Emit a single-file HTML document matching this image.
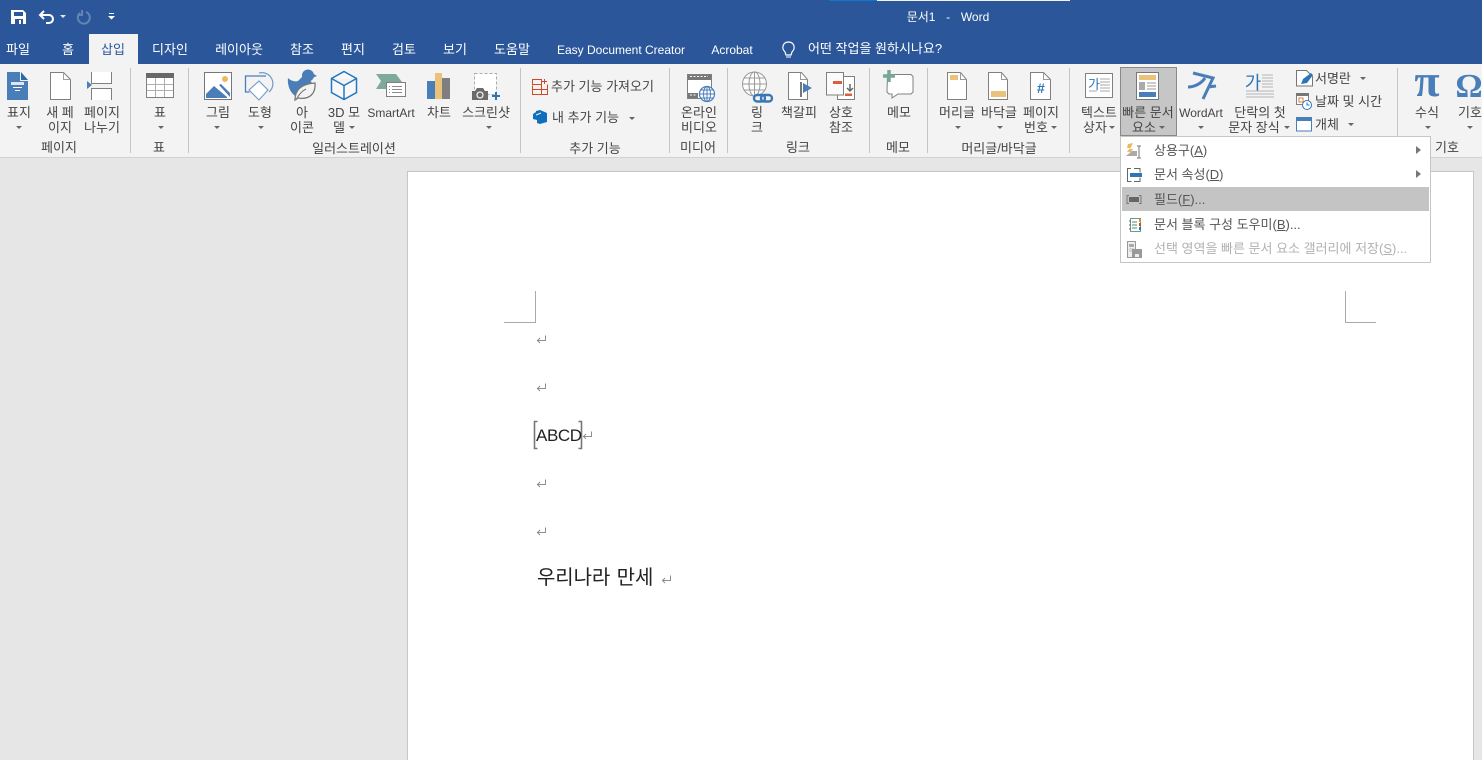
<!DOCTYPE html>
<html lang="ko"><head><meta charset="utf-8"><title>문서1 - Word</title>
<style>
html,body{margin:0;padding:0;width:1482px;height:760px;overflow:hidden;background:#e6e6e6}
body{font-family:"Liberation Sans","Noto Sans CJK KR",sans-serif;font-size:13px;color:#444;position:relative}
#b{position:absolute;left:0;top:0;width:1482px;height:64px;background:#2b579a}
#r{position:absolute;left:0;top:64px;width:1482px;height:93px;background:#f3f3f3;border-bottom:1px solid #d2d2d2}
#p{position:absolute;left:407px;top:171px;width:1065px;height:600px;background:#fff;border:1px solid #c6c6c6}
svg{position:absolute;left:0;top:0}
.c,.l{position:absolute;white-space:nowrap;line-height:16px}
.c{transform:translate(-50%,calc(-50% + 2px))}
.l{transform:translateY(calc(-50% + 2px))}
.w{color:#fff}
.g{color:#b1b1b1}
.m{color:#555}
.e{font-size:12px}
u{text-underline-offset:1px}
</style></head><body>
<div id="b"></div><div id="r"></div><div id="p"></div>
<svg width="1482" height="760" viewBox="0 0 1482 760" fill="none">
<!-- title bar -->
<rect x="829" y="0" width="48" height="1" fill="#0a7ad1"/><rect x="877" y="0" width="193" height="1" fill="#f2f2f2"/>
<rect x="89" y="34" width="49" height="30" fill="#f3f3f3"/>
<path d="M11 10h12l3 3v11H11z" fill="#fff"/><rect x="14" y="12" width="9" height="4" fill="#2b579a"/><rect x="15" y="19" width="8" height="5" fill="#2b579a"/><rect x="19" y="20" width="2" height="4" fill="#fff"/>
<path d="M41 15h8a4 4 0 0 1 0 8h-3M44 11l-4 4 4 4" stroke="#fff" stroke-width="2"/>
<path d="M60 15h6l-3 3z" fill="#dfe6f1"/>
<path d="M86 12a6 6 0 1 1-7 2l1-1M82 10v5h-4" stroke="#6484b5" stroke-width="2"/>
<path d="M109 13h5v1h-5zM108 16h7l-3.500 3.500z" fill="#fff"/>
<path d="M785 52c-4-4-2-10 3.500-10s7.500 6 3.500 10l-1 3h-5z" stroke="#fff" stroke-width="1.200"/><path d="M786 57h5" stroke="#fff"/>
<!-- separators -->
<path d="M130.500 68v85M188.500 68v85M520.500 68v85M669.500 68v85M727.500 68v85M869.500 68v85M927.500 68v85M1069.500 68v85M1397.500 68v85" stroke="#c4c4c4"/>
<!-- cover -->
<path d="M7 72h13v9h8v19H7z" fill="#4a7eb8"/><path d="M21 72l7 8h-7z" fill="#2f68a8"/><rect x="11" y="82" width="13" height="3" fill="#dce7f2"/><path d="M13 87.500h9M15 90.500h5" stroke="#fff"/>
<!-- new page -->
<path d="M50.500 72.500h13l7 7v20h-20z" fill="#fff" stroke="#808080"/><path d="M63.500 72.500v7h7" stroke="#a0a0a0"/>
<!-- page break -->
<path d="M91.500 72v11.500h20V72M91.500 100V88.500h20V100" fill="#fff" stroke="#808080"/><path d="M87 81l5 4-5 4z" fill="#4a7eb8"/>
<!-- table -->
<rect x="146" y="73" width="28" height="25" fill="#fff"/>
<path d="M146 84.500h28M146 90.500h28M155.500 78v20M164.500 78v20" stroke="#b0b0b0"/><path d="M146.500 73v24.500h27V73" stroke="#808080"/><rect x="146" y="73" width="28" height="5" fill="#696969"/>
<!-- picture -->
<rect x="204.500" y="72.500" width="27" height="27" fill="#fff" stroke="#777"/><circle cx="225" cy="79" r="3" fill="#eab95e"/><path d="M206 98v-4l8-8 13 11v1zM219 85l2-1 9 9v4z" fill="#4a7eb8"/>
<!-- shapes -->
<path d="M266 76h-20.500v16h4" stroke="#4a7eb8" stroke-width="1.300"/><path d="M259 81l9 9-9 10-10-10z" fill="#fff" stroke="#6e9bc9" stroke-width="1.100"/><path d="M259 73a11 11 0 0 1 10 19" stroke="#6e9bc9" stroke-width="1.200"/>
<!-- icons -->
<circle cx="308" cy="75.500" r="6" fill="#4a7eb8"/><path d="M312 73l5 3-5 2z" fill="#4a7eb8"/><path d="M288 78c3 3 7 4 10 3l4-4 10 5-8 6-6 9c-7-2-11-11-10-19z" fill="#4a7eb8"/><path d="M295 100c0-8 4-16 20-17 1 10-5 17-17 15z" fill="#f3f3f3" stroke="#777" stroke-width="1.300"/><path d="M296 100c3-6 6-9 10-11" stroke="#777"/>
<!-- 3D -->
<path d="M344 71.500l12.500 7v14l-12.500 7-12.500-7v-14zM331.500 78.500l12.500 7 12.500-7M344 85.500v14" stroke="#2478c0" stroke-width="1.500" fill="#f8f8f8"/>
<!-- smartart -->
<path d="M376 74h20l6 8h-16v7h-10l5-8z" fill="#7fa99b"/><rect x="386.500" y="82.500" width="19" height="14" fill="#fff" stroke="#808080"/><path d="M392 86.500h10M392 89.500h10M392 92.500h10M389 86.500h1M389 89.500h1M389 92.500h1" stroke="#8c8c8c"/>
<!-- chart -->
<rect x="427" y="81" width="8" height="18" fill="#4a7eb8"/><rect x="435" y="73" width="7" height="26" fill="#eac27a"/><rect x="442" y="78" width="8" height="21" fill="#7f7f7f"/>
<!-- screenshot -->
<rect x="474.500" y="73.500" width="22" height="21" fill="#fff" stroke="#aaa" stroke-dasharray="3 2"/><path d="M472 91h3l2-3h6l2 3h3v9h-16z" fill="#6b6b6b"/><circle cx="480" cy="95" r="3" fill="#6b6b6b" stroke="#eee" stroke-width="1.300"/><path d="M496 92v8M492 96h8" stroke="#2e75b6" stroke-width="2"/>
<!-- add-ins -->
<path d="M532.500 85.500v9h15v-10M532.500 84.500h9v-5h-9zM541.500 84.500v10M532.500 89.500h15M544.500 79v5M542 81.500h5" stroke="#d24726"/>
<path d="M540 110l7 3v9l-7 2-3-1v-3l-4-1v-5l3-2v-1z" fill="#106ebe"/><path d="M536 115l5-2" stroke="#f3f3f3"/>
<!-- video -->
<rect x="687.500" y="74.500" width="24" height="24" fill="#fff" stroke="#808080"/><path d="M688 75h23v5h-23zM688 93h10v5h-10z" fill="#777"/><path d="M690 76.500h18M690 95h6" stroke="#fff" stroke-dasharray="2 1.500"/>
<circle cx="707" cy="94" r="7.500" fill="#fff" stroke="#4a7eb8" stroke-width="1.200"/><path d="M699.500 94h15M707 86.500v15M701 90h12M701 98h12" stroke="#4a7eb8"/><ellipse cx="707" cy="94" rx="3.500" ry="7.500" stroke="#4a7eb8"/>
<!-- link -->
<circle cx="754.500" cy="84" r="12" fill="#fdfdfd" stroke="#9a9a9a"/><ellipse cx="754.500" cy="84" rx="5.500" ry="12" stroke="#9a9a9a"/><path d="M754.500 72v24M742.500 84h24M744.500 78h20M744.500 90h20" stroke="#9a9a9a"/>
<rect x="754" y="95" width="11" height="6.500" rx="3.200" stroke="#3a78b5" stroke-width="2.400" fill="#f3f3f3"/><rect x="761" y="95" width="11" height="6.500" rx="3.200" stroke="#3a78b5" stroke-width="2.400"/>
<!-- bookmark -->
<path d="M788.500 72.500h13l6 7v20h-19z" fill="#fff" stroke="#808080"/><path d="M800.500 72.500v7h7" stroke="#999"/><rect x="800" y="82" width="2" height="15" fill="#777"/><path d="M803 83l9 5-9 5z" fill="#4a7eb8"/>
<!-- cross ref -->
<rect x="837.500" y="76.500" width="17" height="23" fill="#fff" stroke="#808080"/><rect x="826.500" y="72.500" width="17" height="22.500" fill="#fbfbfb" stroke="#808080"/><rect x="833" y="81" width="9" height="3" fill="#d9603f"/><rect x="845" y="93.500" width="7" height="2.500" fill="#d9603f"/><path d="M850 84v7M847 88l3 3 3-3" stroke="#666" stroke-width="1.500"/>
<!-- comment -->
<path d="M887.500 74.500h23.500l2 2v15.500l-2 2H898l-6 4v-4h-3l-2-2z" fill="#fff" stroke="#808080"/><path d="M889 70v12M883 76h12" stroke="#78a797" stroke-width="3.500"/>
<!-- header footer number -->
<path d="M947.500 72.500h13l6 7v20h-19z" fill="#fff" stroke="#808080"/><path d="M960.500 72.500v7h6" stroke="#999"/><rect x="950" y="75" width="8" height="5" fill="#eac27a"/>
<path d="M988.500 72.500h13l6 7v20h-19z" fill="#fff" stroke="#808080"/><path d="M1001.500 72.500v7h6" stroke="#999"/><rect x="991" y="91" width="15" height="6" fill="#eac27a"/>
<path d="M1030.500 72.500h13l7 7v20h-20z" fill="#fff" stroke="#808080"/><path d="M1043.500 72.500v7h7" stroke="#999"/>
<!-- text box -->
<rect x="1085.500" y="73.500" width="27" height="24" fill="#fff" stroke="#808080"/><path d="M1100 79h10M1100 82h10M1100 85h10M1100 88h10M1100 91h10M1089 91h8" stroke="#aaa"/>
<!-- quick parts highlighted -->
<rect x="1120.500" y="67.500" width="56" height="68" fill="#c6c6c6" stroke="#8a8a8a"/>
<rect x="1136.500" y="72.500" width="22" height="27" fill="#fff" stroke="#777"/><rect x="1139" y="75" width="17" height="5" fill="#eac27a"/><rect x="1139" y="82" width="6" height="8" fill="#aaa"/><path d="M1147 83h9M1147 86h9M1147 89h9" stroke="#999"/><rect x="1139" y="92" width="17" height="5" fill="#4a7eb8"/>
<!-- wordart -->
<path d="M1188 87c6 0 13-3 17-9" stroke="#4a7eb8" stroke-width="3"/><path d="M1193 73l20 5-10 21M1208 87l8-1" stroke="#4a7eb8" stroke-width="3"/>
<!-- drop cap -->
<path d="M1262 75h11M1262 78h11M1262 81h11M1262 84h11M1262 87h11M1246 91h28M1246 94h28M1246 97h28" stroke="#b4b4b4"/>
<!-- signature -->
<path d="M1296.500 70.500h10l6 6v9.500h-16z" fill="#fff" stroke="#777"/><path d="M1301 84l2-5 8-6 2 2-6 8z" fill="#2e75b6"/>
<!-- date -->
<rect x="1296.500" y="93.500" width="12" height="11" fill="#fff" stroke="#808080"/><rect x="1296" y="93" width="13" height="3" fill="#777"/><rect x="1299" y="98" width="4" height="4" fill="#fff" stroke="#d9803f"/><circle cx="1307" cy="105" r="4.500" fill="#fff" stroke="#2e75b6"/><path d="M1307 102.500v2.500h2.500" stroke="#2e75b6"/>
<!-- object -->
<rect x="1296.500" y="117.500" width="15" height="13.500" fill="#fff" stroke="#4a7eb8"/><rect x="1296" y="117" width="16" height="4" fill="#4a7eb8"/>
<!-- triangles -->
<path fill="#666" d="M16 126h6l-3 3zM158 126h6l-3 3zM214 126h6l-3 3zM258 126h6l-3 3zM349 126h6l-3 3zM486 126h6l-3 3zM955 126h6l-3 3zM997 126h6l-3 3zM1051 126h6l-3 3zM1109 126h6l-3 3zM1159 126h6l-3 3zM1198 126h6l-3 3zM1284 126h6l-3 3zM1425 126h6l-3 3zM1467 126h6l-3 3zM1360 77h6l-3 3zM1348 123h6l-3 3zM629 117h6l-3 3z"/>
<!-- menu -->
<rect x="1120.500" y="136.500" width="310" height="126" fill="#fff" stroke="#c6c6c6"/>
<rect x="1122" y="187" width="307" height="24" fill="#c4c4c4"/>
<path d="M1416 146l5 4-5 4zM1416 170l5 4-5 4z" fill="#777"/>
<path d="M1128 144l5-1-3 6h3l-2 3h-4l3-4h-3z" fill="#eab95e"/><path d="M1126 156l6-5h5v5z" fill="#aaa"/><path d="M1137 146h4M1139 146v12M1137 158h4" stroke="#777"/>
<path d="M1131 168.500h-3.500v13h4M1134 168.500h6v4M1134 181.500h6v-4" stroke="#666"/><rect x="1130" y="173" width="12" height="4" fill="#2e75b6"/>
<path d="M1127 195.500v8h2M1127 195.500h2M1141 195.500v8h-2M1141 195.500h-2" stroke="#777"/><rect x="1129" y="197" width="10" height="5" fill="#666"/>
<rect x="1130.500" y="218.500" width="10" height="13" fill="#fff" stroke="#6d9d8c"/><path d="M1132 222h5M1132 225h5M1132 228h5" stroke="#4c8a78"/><rect x="1139" y="219" width="2" height="3" fill="#e08a3c"/><rect x="1139" y="223" width="2" height="3" fill="#d24726"/><rect x="1139" y="227" width="2" height="3" fill="#2e75b6"/><path d="M1129 221h2M1129 225h2M1129 229h2" stroke="#666"/>
<path d="M1127.500 241.500h8v16h-8z" fill="#eee" stroke="#999"/><rect x="1129" y="244" width="5" height="3" fill="#aaa"/><path d="M1129 249h5M1129 251h5" stroke="#bbb"/><rect x="1132" y="249" width="10" height="9" fill="#999"/><rect x="1135" y="254" width="4" height="3" fill="#eee"/>
<!-- crop marks -->
<path d="M535.500 291v31.500H504M1345.500 291v31.500H1376" stroke="#aaa"/>
<!-- return marks -->
<g stroke="#8f8f8f"><path d="M545.500 335.500v5H537M540 338l-2.500 2.500 2.500 2.500"/><path d="M545.500 383.500v5H537M540 386l-2.500 2.500 2.500 2.500"/><path d="M545.500 479.500v5H537M540 482l-2.500 2.500 2.500 2.500"/><path d="M545.500 527.500v5H537M540 530l-2.500 2.500 2.500 2.500"/><path d="M591.500 431.500v5H583M586 434l-2.500 2.500 2.500 2.500"/><path d="M670.500 575.500v5H662M665 578l-2.500 2.500 2.500 2.500"/></g>
<path d="M537.500 421.500h-3v27h3M578.500 421.500h3v27h-3" stroke="#777" stroke-width="1.600"/>
</svg>

<div class="c w e" style="left:948px;top:15px;word-spacing:2px">문서1 &nbsp;- &nbsp;Word</div>
<div class="c w" style="left:18px;top:48px">파일</div>
<div class="c w" style="left:68px;top:48px">홈</div>
<div class="c" style="left:113px;top:48px;color:#2b579a">삽입</div>
<div class="c w" style="left:170px;top:48px">디자인</div>
<div class="c w" style="left:239px;top:48px">레이아웃</div>
<div class="c w" style="left:302px;top:48px">참조</div>
<div class="c w" style="left:353px;top:48px">편지</div>
<div class="c w" style="left:404px;top:48px">검토</div>
<div class="c w" style="left:455px;top:48px">보기</div>
<div class="c w" style="left:512px;top:48px">도움말</div>
<div class="c w e" style="left:621px;top:48px">Easy Document Creator</div>
<div class="c w e" style="left:732px;top:48px">Acrobat</div>
<div class="l w" style="left:808px;top:47px">어떤 작업을 원하시나요?</div>

<div class="c" style="left:19px;top:111px">표지</div>
<div class="c" style="left:60px;top:111px">새 페</div><div class="c" style="left:60px;top:126px">이지</div>
<div class="c" style="left:102px;top:111px">페이지</div><div class="c" style="left:102px;top:126px">나누기</div>
<div class="c" style="left:59px;top:146px">페이지</div>
<div class="c" style="left:160px;top:111px">표</div><div class="c" style="left:159px;top:146px">표</div>
<div class="c" style="left:218px;top:111px">그림</div>
<div class="c" style="left:260px;top:111px">도형</div>
<div class="c" style="left:302px;top:111px">아</div><div class="c" style="left:302px;top:126px">이콘</div>
<div class="c" style="left:344px;top:111px">3D 모</div><div class="c" style="left:339px;top:126px">델</div>
<div class="c e" style="left:391px;top:111px">SmartArt</div>
<div class="c" style="left:439px;top:111px">차트</div>
<div class="c" style="left:486px;top:111px">스크린샷</div>
<div class="c" style="left:354px;top:147px">일러스트레이션</div>
<div class="l" style="left:551px;top:85px">추가 기능 가져오기</div>
<div class="l" style="left:552px;top:116px">내 추가 기능</div>
<div class="c" style="left:595px;top:147px">추가 기능</div>
<div class="c" style="left:699px;top:111px">온라인</div><div class="c" style="left:699px;top:126px">비디오</div><div class="c" style="left:698px;top:146px">미디어</div>
<div class="c" style="left:757px;top:111px">링</div><div class="c" style="left:757px;top:126px">크</div>
<div class="c" style="left:799px;top:111px">책갈피</div>
<div class="c" style="left:841px;top:111px">상호</div><div class="c" style="left:841px;top:126px">참조</div>
<div class="c" style="left:798px;top:146px">링크</div>
<div class="c" style="left:899px;top:111px">메모</div><div class="c" style="left:898px;top:146px">메모</div>
<div class="c" style="left:957px;top:111px">머리글</div>
<div class="c" style="left:999px;top:111px">바닥글</div>
<div class="c" style="left:1041px;top:111px">페이지</div><div class="c" style="left:1036px;top:126px">번호</div>
<div class="c" style="left:999px;top:147px">머리글/바닥글</div>
<div class="l" style="left:1037px;top:86px;color:#2e75b6;font-weight:bold;font-size:14px">#</div>
<div class="c" style="left:1094px;top:83px;color:#2e75b6">가</div>
<div class="c" style="left:1099px;top:111px">텍스트</div><div class="c" style="left:1095px;top:126px">상자</div>
<div class="c" style="left:1148px;top:111px">빠른 문서</div><div class="c" style="left:1144px;top:126px">요소</div>
<div class="c e" style="left:1201px;top:111px">WordArt</div>
<div class="c" style="left:1253px;top:81px;color:#2e75b6;font-size:18px">가</div>
<div class="c" style="left:1260px;top:111px">단락의 첫</div><div class="c" style="left:1254px;top:126px">문자 장식</div>
<div class="l" style="left:1315px;top:77px">서명란</div>
<div class="l" style="left:1315px;top:100px">날짜 및 시간</div>
<div class="l" style="left:1315px;top:123px">개체</div>
<div class="c" style="left:1427px;top:79px;color:#4a7eb8;font:bold 46px/40px 'Liberation Serif',serif">π</div>
<div class="c" style="left:1469px;top:85px;color:#4a7eb8;font:bold 34px/36px 'Liberation Serif',serif">Ω</div>
<div class="c" style="left:1427px;top:111px">수식</div>
<div class="c" style="left:1470px;top:111px">기호</div>
<div class="c" style="left:1447px;top:146px">기호</div>

<div class="l m" style="left:1154px;top:149px">상용구(<u>A</u>)</div>
<div class="l m" style="left:1154px;top:173px">문서 속성(<u>D</u>)</div>
<div class="l m" style="left:1154px;top:198px">필드(<u>F</u>)...</div>
<div class="l m" style="left:1154px;top:223px">문서 블록 구성 도우미(<u>B</u>)...</div>
<div class="l g" style="left:1154px;top:247px">선택 영역을 빠른 문서 요소 갤러리에 저장(<u>S</u>)...</div>

<div class="l" style="left:536px;top:434px;font-size:17px;color:#222;letter-spacing:-.4px">ABCD</div>
<div class="l" style="left:537px;top:576px;font-size:20px;color:#222;word-spacing:1px;letter-spacing:-.1px">우리나라 만세</div>
</body></html>
